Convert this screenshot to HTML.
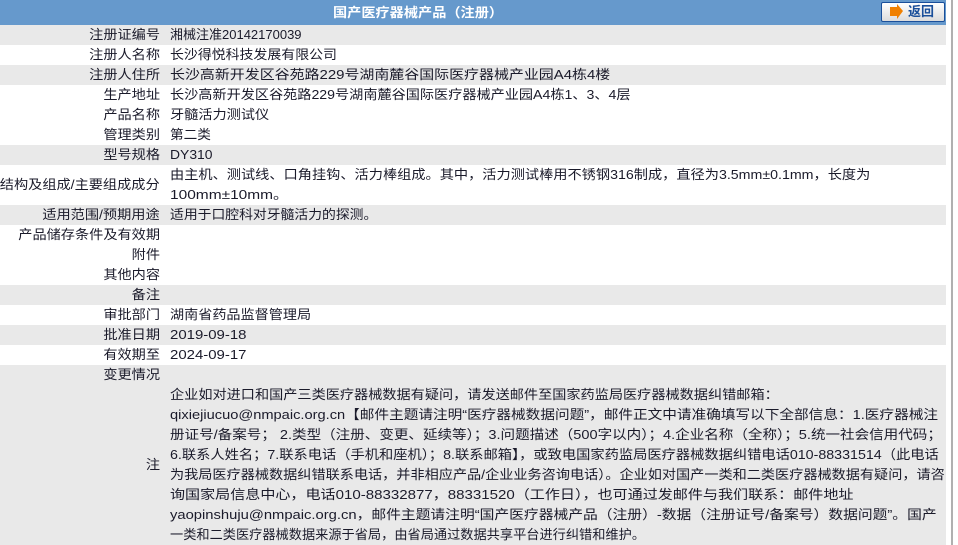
<!DOCTYPE html>
<html><head><meta charset="utf-8"><style>
*{margin:0;padding:0;box-sizing:border-box}
body{width:958px;height:545px;overflow:hidden;background:#fff;font-family:"Liberation Sans","Noto Sans CJK SC",sans-serif;font-size:13px;color:#1a1a2a;position:relative}
.hdr{position:absolute;left:0;top:0;width:946px;height:25px;background:#6699cc;color:#fff;font-weight:bold;line-height:25px}
.hdr span{position:absolute;left:333px;top:0;display:inline-block;transform:scaleX(1.09);transform-origin:left}
.btn{position:absolute;left:881px;top:2px;width:64px;height:20px;border:1px solid #1a4f9a;border-radius:2px;background:linear-gradient(#fff,#dcdcdc);color:#1a4f9a;font-weight:bold;font-size:13px;line-height:18px}
.btn .ar{position:absolute;left:8px;top:4px;width:7px;height:9px;background:#f08000}
.btn .ar:after{content:"";position:absolute;left:7px;top:-3px;border-left:6px solid #f08000;border-top:7px solid transparent;border-bottom:8px solid transparent}
.btn .t{position:absolute;left:26px;top:0}
.sb{position:absolute;left:951px;top:0;width:2px;height:545px;background:#b0b0b0}
.r{position:absolute;left:0;width:946px;line-height:20px}
.g{background:#e9e9e9}
.l{position:absolute;right:786px;white-space:nowrap;display:inline-block;transform:scaleX(1.09);transform-origin:right}
.v{position:absolute;left:170px;white-space:nowrap;display:inline-block;transform-origin:left}
.n div{white-space:nowrap;transform-origin:left;width:max-content}
</style></head><body>
<div class="hdr"><span>国产医疗器械产品（注册）</span></div>
<div class="btn"><span class="ar"></span><span class="t">返回</span></div>
<div class="sb"></div>
<div class="r g" style="top:25px;height:20px"><span class="l">注册证编号</span><span class="v">湘械注准20142170039</span></div>
<div class="r" style="top:45px;height:20px"><span class="l">注册人名称</span><span class="v" style="transform:scaleX(1.07)">长沙得悦科技发展有限公司</span></div>
<div class="r g" style="top:65px;height:20px"><span class="l">注册人住所</span><span class="v" style="transform:scaleX(1.15)">长沙高新开发区谷苑路229号湖南麓谷国际医疗器械产业园A4栋4楼</span></div>
<div class="r" style="top:85px;height:20px"><span class="l">生产地址</span><span class="v" style="transform:scaleX(1.088)">长沙高新开发区谷苑路229号湖南麓谷国际医疗器械产业园A4栋1、3、4层</span></div>
<div class="r" style="top:105px;height:20px"><span class="l">产品名称</span><span class="v" style="transform:scaleX(1.09)">牙髓活力测试仪</span></div>
<div class="r" style="top:125px;height:20px"><span class="l">管理类别</span><span class="v" style="transform:scaleX(1.05)">第二类</span></div>
<div class="r g" style="top:145px;height:20px"><span class="l">型号规格</span><span class="v" style="transform:scaleX(1.07)">DY310</span></div>
<div class="r" style="top:165px;height:40px"><span class="l" style="top:10px">结构及组成/主要组成成分</span><span class="v n" style="top:0"><div style="transform:scaleX(1.092)">由主机、测试线、口角挂钩、活力棒组成。其中，活力测试棒用不锈钢316制成，直径为3.5mm±0.1mm，长度为</div><div style="transform:scaleX(1.19)">100mm±10mm。</div></span></div>
<div class="r g" style="top:205px;height:20px"><span class="l">适用范围/预期用途</span><span class="v" style="transform:scaleX(1.063)">适用于口腔科对牙髓活力的探测。</span></div>
<div class="r" style="top:225px;height:20px"><span class="l">产品储存条件及有效期</span></div>
<div class="r" style="top:245px;height:20px"><span class="l">附件</span></div>
<div class="r" style="top:265px;height:20px"><span class="l">其他内容</span></div>
<div class="r g" style="top:285px;height:20px"><span class="l">备注</span></div>
<div class="r" style="top:305px;height:20px"><span class="l">审批部门</span><span class="v" style="transform:scaleX(1.085)">湖南省药品监督管理局</span></div>
<div class="r g" style="top:325px;height:20px"><span class="l">批准日期</span><span class="v" style="transform:scaleX(1.15)">2019-09-18</span></div>
<div class="r" style="top:345px;height:20px"><span class="l">有效期至</span><span class="v" style="transform:scaleX(1.15)">2024-09-17</span></div>
<div class="r g" style="top:365px;height:20px"><span class="l">变更情况</span></div>
<div class="r g" style="top:385px;height:160px"><span class="l" style="top:70px">注</span><span class="v n" style="top:0">
<div style="transform:scaleX(1.089)">企业如对进口和国产三类医疗器械数据有疑问，请发送邮件至国家药监局医疗器械数据纠错邮箱：</div>
<div style="transform:scaleX(1.126)">qixiejiucuo@nmpaic.org.cn【邮件主题请注明“医疗器械数据问题”，邮件正文中请准确填写以下全部信息：1.医疗器械注</div>
<div style="transform:scaleX(1.119)">册证号/备案号； 2.类型（注册、变更、延续等）；3.问题描述（500字以内）；4.企业名称（全称）；5.统一社会信用代码；</div>
<div style="transform:scaleX(1.096)">6.联系人姓名；7.联系电话（手机和座机）；8.联系邮箱】，或致电国家药监局医疗器械数据纠错电话010-88331514（此电话</div>
<div style="transform:scaleX(1.088)">为我局医疗器械数据纠错联系电话，并非相应产品/企业业务咨询电话）。企业如对国产一类和二类医疗器械数据有疑问，请咨</div>
<div style="transform:scaleX(1.158)">询国家局信息中心，电话010-88332877，88331520（工作日），也可通过发邮件与我们联系：邮件地址</div>
<div style="transform:scaleX(1.136)">yaopinshuju@nmpaic.org.cn，邮件主题请注明“国产医疗器械产品（注册）-数据（注册证号/备案号）数据问题”。国产</div>
<div style="transform:scaleX(1.015)">一类和二类医疗器械数据来源于省局，由省局通过数据共享平台进行纠错和维护。</div>
</span></div>
</body></html>
